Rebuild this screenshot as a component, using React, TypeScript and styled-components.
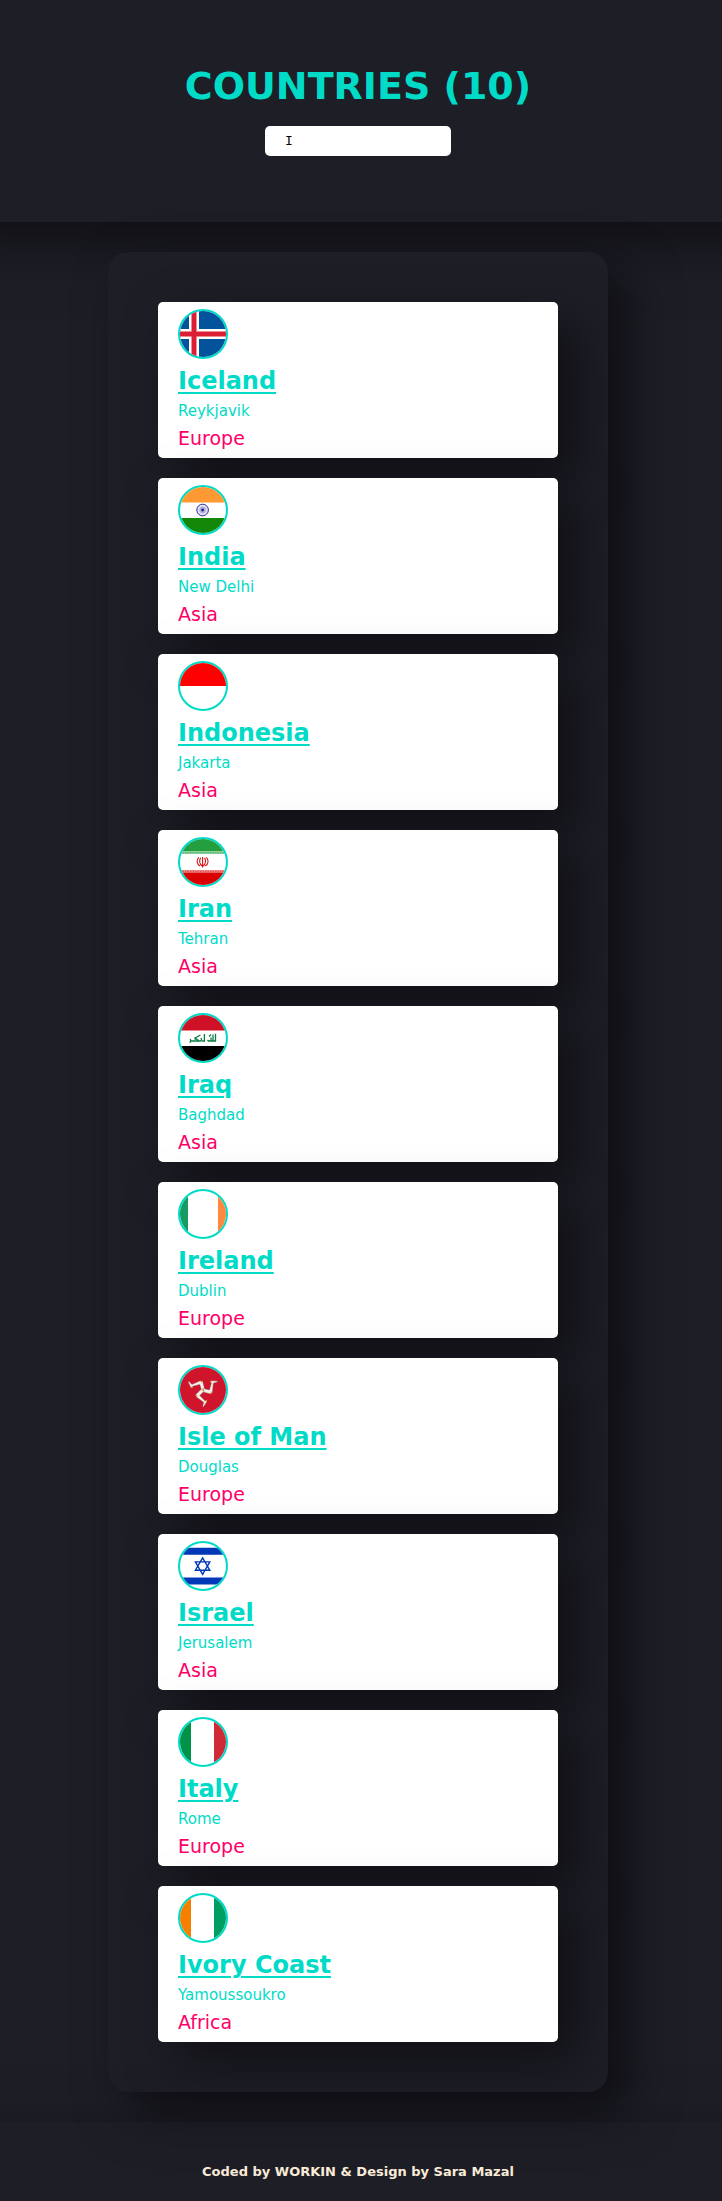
import React, { useState } from "react";
import styled, { createGlobalStyle } from "styled-components";

const teal = "#00dbc7";
const pink = "#ff0068";
const night = "#1e1e27";
const shadow = "20px 20px 50px rgba(0, 0, 0, 0.5)";

const GlobalStyle = createGlobalStyle`
  *, *::before, *::after { box-sizing: border-box; }
  body {
    margin: 0;
    background: ${night};
    font-family: "DejaVu Sans", Verdana, sans-serif;
  }
`;

const Page = styled.div`
  overflow: hidden;
`;

const Header = styled.header`
  display: flex;
  flex-direction: column;
  align-items: center;
  gap: 20px;
  padding: 66px 6px 66px 0;
  box-shadow: 0 -30px 50px 50px rgba(0, 0, 0, 0.5);
`;

const Title = styled.h1`
  margin: 0;
  color: ${teal};
  font-size: 38px;
  line-height: 40px;
  text-transform: uppercase;
`;

const SearchInput = styled.input`
  width: 186px;
  height: 30px;
  padding: 0 20px;
  border: 0;
  border-radius: 5px;
  background: #fff;
  color: #000;
  font-family: "Liberation Mono", monospace;
  font-size: 13px;
`;

const Main = styled.main`
  padding: 30px 6px 30px 0;
`;

const Panel = styled.ul`
  display: flex;
  flex-direction: column;
  gap: 20px;
  max-width: 500px;
  margin: 0 auto;
  padding: 50px;
  list-style: none;
  border-radius: 20px;
  background: ${night};
  box-shadow: ${shadow};
`;

const Card = styled.li`
  display: flex;
  flex-direction: column;
  align-items: flex-start;
  gap: 6px;
  padding: 7px 20px 9px;
  border-radius: 5px;
  background: #fff;
  box-shadow: ${shadow};
`;

const Flag = styled.svg`
  width: 50px;
  height: 50px;
  margin-bottom: 2px;
  border: 2px solid ${teal};
  border-radius: 50%;
  background: #fff;
`;

const Name = styled.h2`
  margin: 0;
  font-size: 24px;
  line-height: 28px;
`;

const NameLink = styled.a`
  color: ${teal};
  text-decoration: underline;
  text-decoration-thickness: 2px;
  text-underline-offset: 3px;
`;

const Capital = styled.p`
  margin: 0;
  color: ${teal};
  font-size: 15px;
  line-height: 20px;
`;

const Continent = styled.p`
  margin: 0;
  color: ${pink};
  font-size: 19px;
  line-height: 22px;
`;

const Footer = styled.footer`
  padding: 40px 6px 19px 0;
  color: #faebd7;
  font-size: 13px;
  font-weight: bold;
  line-height: 20px;
  text-align: center;
  box-shadow: 0 70px 50px 50px rgba(0, 0, 0, 0.5);
`;

function Leg({ angle }: { angle: number }) {
  return (
    <g transform={`rotate(${angle} 23 23)`}>
      <path
        d="M21.6 23.6L19.8 17.4L12.8 19.2L12.2 20.8L10.8 20.4L8 14.8L9 14.6L12 17.4L20.2 13.8L22.6 14.2L24.6 22Z"
        fill="#f4efee"
        stroke="#8c5b62"
        strokeWidth="0.4"
      />
      <path d="M20.2 14.4L22.2 14.8M10.8 20L12.4 20.6" stroke="#e0ac20" strokeWidth="1.2" />
    </g>
  );
}

const flags: Record<string, React.ReactNode> = {
  Iceland: (
    <>
      <rect width="46" height="46" fill="#02529c" />
      <path d="M14 0V46M0 23H46" stroke="#fff" strokeWidth="10" />
      <path d="M14 0V46M0 23H46" stroke="#dc1e35" strokeWidth="5" />
    </>
  ),
  India: (
    <>
      <rect width="46" height="15.5" fill="#ff9933" />
      <rect y="31" width="46" height="15" fill="#138808" />
      <circle cx="22.6" cy="23" r="5.8" fill="#e4e4f3" stroke="#2a2a98" strokeWidth="1" />
      <circle cx="22.6" cy="23" r="3.4" fill="#b3b3dc" />
      <circle cx="22.6" cy="23" r="1.4" fill="#1c1c8c" />
    </>
  ),
  Indonesia: <rect width="46" height="23" fill="#ff0000" />,
  Iran: (
    <>
      <rect width="46" height="12.5" fill="#239f40" />
      <rect y="12.5" width="46" height="2.5" fill="#8fcf9e" />
      <path d="M0 13.8H46" stroke="#4bb063" strokeWidth="1" strokeDasharray="1.5 1" />
      <rect y="31" width="46" height="2.5" fill="#ee9090" />
      <path d="M0 32.2H46" stroke="#dc3838" strokeWidth="1" strokeDasharray="1.5 1" />
      <rect y="33.5" width="46" height="12.5" fill="#da0000" />
      <path
        d="M22.6 18V28.5M18.8 18.4C16.2 21 16.6 25.2 20 27M26.4 18.4C29 21 28.6 25.2 25.2 27M20.6 18.8C19.2 21.5 19.6 25 22.2 27M24.6 18.8C26 21.5 25.6 25 23 27"
        fill="none"
        stroke="#d81010"
        strokeWidth="1.1"
      />
    </>
  ),
  Iraq: (
    <>
      <rect width="46" height="15.5" fill="#ce1126" />
      <rect y="31" width="46" height="15" fill="#000" />
      <path
        d="M9.5 27.5C11 27 11 25.5 10.2 24M11 26H19.5L15 23L20.5 20M14.5 24H17M20 26C22 26 21.5 24 21 23M22 26H24.4V19M27.5 24.8L28.5 26H31V22.5M31 26H33V19.5M33 26H35.5V18.8M29 21.5L31 19.5"
        fill="none"
        stroke="#0a7c41"
        strokeWidth="1.3"
      />
    </>
  ),
  Ireland: (
    <>
      <rect width="8" height="46" fill="#169b62" />
      <rect x="38" width="8" height="46" fill="#ff883e" />
    </>
  ),
  "Isle of Man": (
    <>
      <rect width="46" height="46" fill="#cf142b" />
      <Leg angle={0} />
      <Leg angle={120} />
      <Leg angle={240} />
      <circle cx="23" cy="23" r="1" fill="#d8a81c" />
    </>
  ),
  Israel: (
    <>
      <path d="M0 8.2H46M0 38H46" stroke="#0038b8" strokeWidth="7" />
      <path
        d="M22.6 14.8L29.8 27.2H15.4ZM22.6 31.4L29.8 18.9H15.4Z"
        fill="none"
        stroke="#0038b8"
        strokeWidth="1.4"
      />
    </>
  ),
  Italy: (
    <>
      <rect width="11" height="46" fill="#009246" />
      <rect x="34" width="12" height="46" fill="#ce2b37" />
    </>
  ),
  "Ivory Coast": (
    <>
      <rect width="11" height="46" fill="#f77f00" />
      <rect x="34" width="12" height="46" fill="#009e60" />
    </>
  ),
};

const countries = [
  { name: "Iceland", capital: "Reykjavik", continent: "Europe" },
  { name: "India", capital: "New Delhi", continent: "Asia" },
  { name: "Indonesia", capital: "Jakarta", continent: "Asia" },
  { name: "Iran", capital: "Tehran", continent: "Asia" },
  { name: "Iraq", capital: "Baghdad", continent: "Asia" },
  { name: "Ireland", capital: "Dublin", continent: "Europe" },
  { name: "Isle of Man", capital: "Douglas", continent: "Europe" },
  { name: "Israel", capital: "Jerusalem", continent: "Asia" },
  { name: "Italy", capital: "Rome", continent: "Europe" },
  { name: "Ivory Coast", capital: "Yamoussoukro", continent: "Africa" },
];

export default function App() {
  const [query, setQuery] = useState("I");
  const shown = countries.filter((c) =>
    c.name.toLowerCase().startsWith(query.toLowerCase())
  );

  return (
    <Page>
      <GlobalStyle />
      <Header>
        <Title>Countries ({shown.length})</Title>
        <SearchInput
          type="text"
          aria-label="Search countries"
          value={query}
          onChange={(e) => setQuery(e.target.value)}
        />
      </Header>
      <Main>
        <Panel>
          {shown.map((c) => (
            <Card key={c.name}>
              <Flag viewBox="0 0 46 46" aria-hidden="true">
                {flags[c.name]}
              </Flag>
              <Name>
                <NameLink href={`#${c.name}`}>{c.name}</NameLink>
              </Name>
              <Capital>{c.capital}</Capital>
              <Continent>{c.continent}</Continent>
            </Card>
          ))}
        </Panel>
      </Main>
      <Footer>Coded by WORKIN &amp; Design by Sara Mazal</Footer>
    </Page>
  );
}
